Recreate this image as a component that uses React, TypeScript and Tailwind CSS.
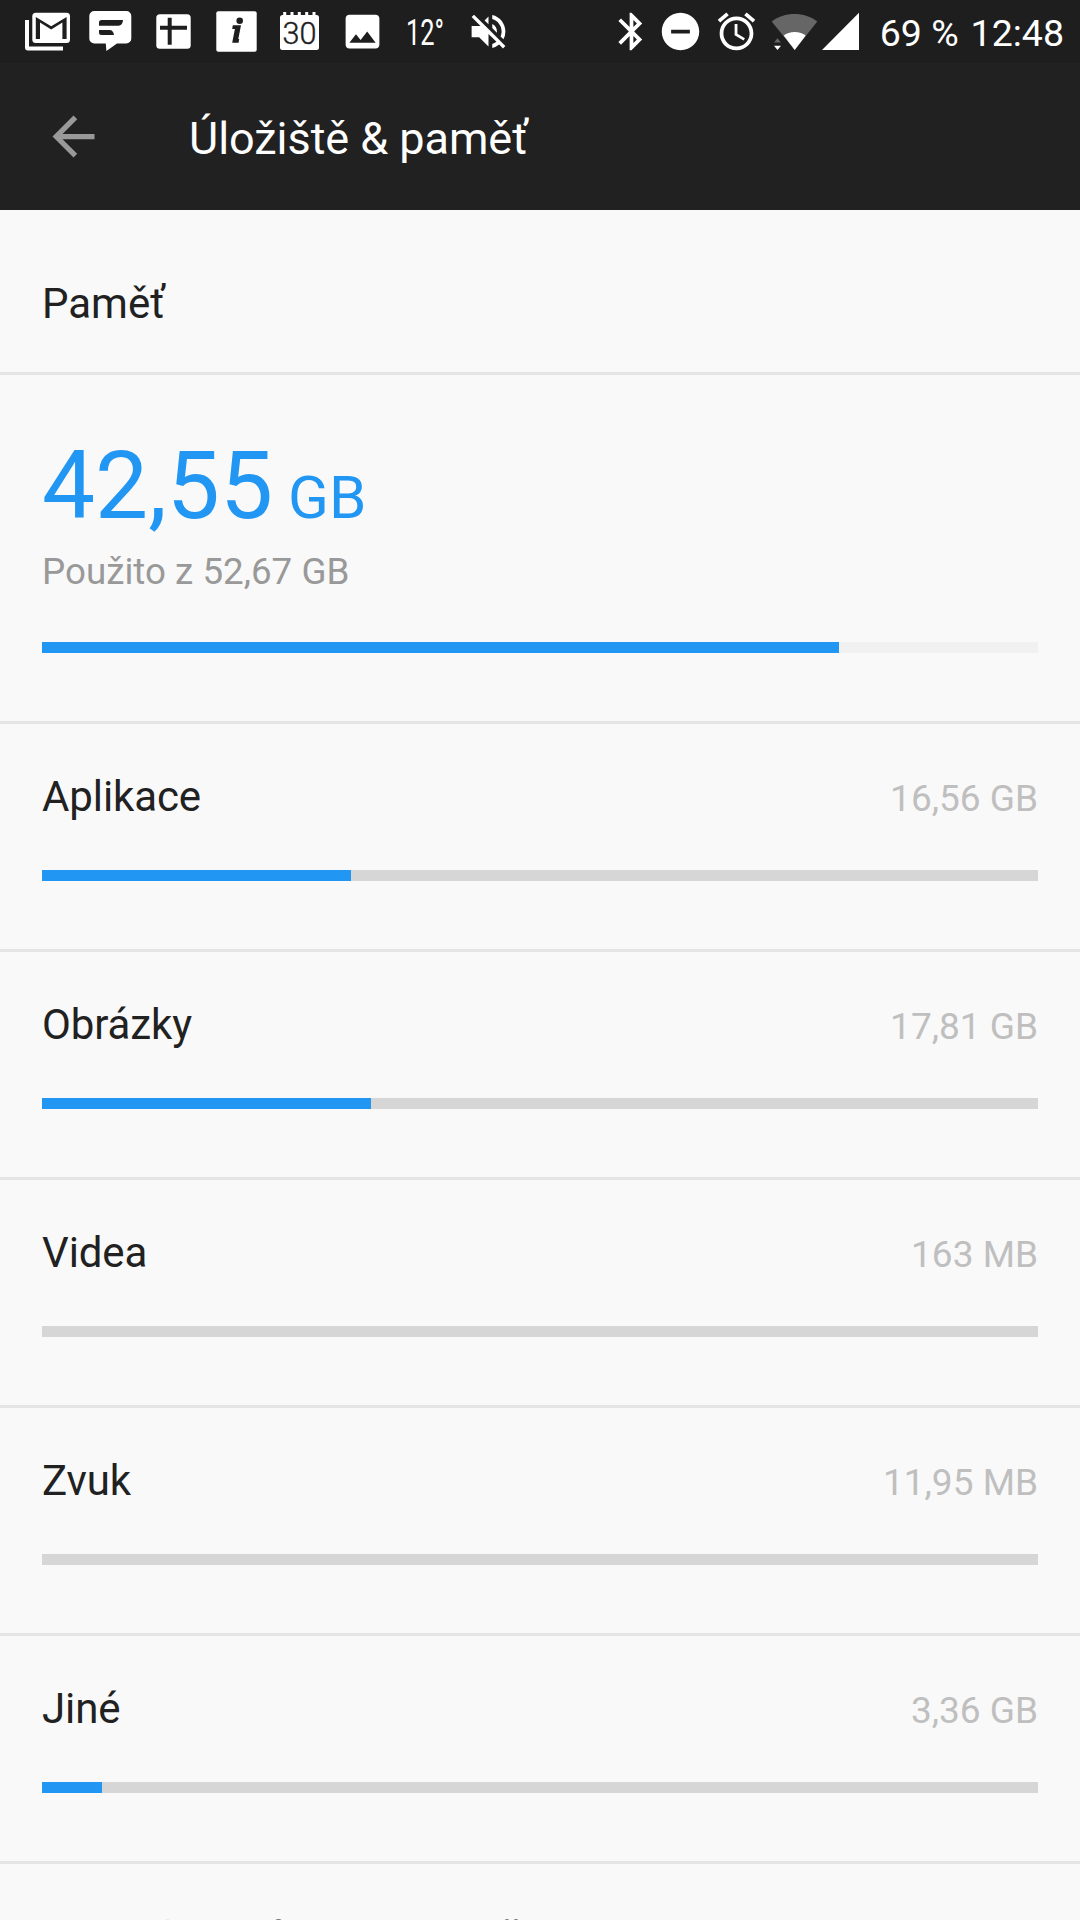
import type { ReactNode } from "react";
import { MdAlarm, MdArrowBack, MdBluetooth, MdDoNotDisturbOn, MdImage, MdVolumeOff } from "react-icons/md";

interface StorageCategory {
  name: string;
  size: string;
  percent: number;
}

const categories: StorageCategory[] = [
  { name: "Aplikace", size: "16,56 GB", percent: 31 },
  { name: "Obrázky", size: "17,81 GB", percent: 33 },
  { name: "Videa", size: "163 MB", percent: 0 },
  { name: "Zvuk", size: "11,95 MB", percent: 0 },
  { name: "Jiné", size: "3,36 GB", percent: 6 },
];

// Every notification sits in a square cell as tall as the status bar
function Cell({ children }: { children: ReactNode }) {
  return <div className="flex size-[63px] items-center justify-center">{children}</div>;
}

function GmailIcon() {
  return (
    <svg viewBox="0 0 63 63" className="size-full">
      <path d="M9 20h4v26.5h34v4H12a3 3 0 0 1-3-3z" fill="#fff" />
      <rect x="16.3" y="12.7" width="37.7" height="30.3" rx="3.5" fill="#fff" />
      <path d="M19.8 39V17L35.2 26.2L50.6 17V39H46.4V22.6L35.2 29.6L24 22.6V39z" fill="#1e1e1e" />
    </svg>
  );
}

function MessageIcon() {
  return (
    <svg viewBox="0 0 63 63" className="size-full">
      <path
        d="M15.3 11h32a5 5 0 0 1 5 5v22.5a5 5 0 0 1-5 5H38L27.4 51l-.6-7.5H15.3a5 5 0 0 1-5-5V16a5 5 0 0 1 5-5z"
        fill="#fff"
      />
      <path
        d="M22.5 20H44c-.3 3.8-1.8 5.7-4.5 5.7H20v-3.2a2.5 2.5 0 0 1 2.5-2.5zM20 30h10.5c2.7 0 4.2 2 4.5 5H22.5a2.5 2.5 0 0 1-2.5-2.5z"
        fill="#1e1e1e"
      />
    </svg>
  );
}

function PlusIcon() {
  return (
    <svg viewBox="0 0 63 63" className="size-full">
      <rect x="14.3" y="14.3" width="34.4" height="34.4" rx="3.5" fill="#fff" />
      <path d="M27.7 17.7V44.7M18 27.7H45" stroke="#1e1e1e" strokeWidth="4" />
    </svg>
  );
}

function InfoIcon() {
  return (
    <svg viewBox="0 0 63 63" className="size-full">
      <rect x="11.3" y="11.3" width="40.4" height="40.4" rx="2" fill="#fff" />
      <circle cx="34.7" cy="20.7" r="3.3" fill="#1e1e1e" />
      <path d="M27.8 25.2H36L33.3 39H34.2L33.6 42.8H27.2L29.9 29H27.2z" fill="#1e1e1e" />
    </svg>
  );
}

function CalendarIcon() {
  return (
    <svg viewBox="0 0 63 63" className="size-full">
      <rect x="12" y="15" width="39" height="35" rx="2.5" fill="#fff" />
      <path d="M16.7 12v4M24 12v4M31.3 12v4M38.7 12v4M46 12v4" stroke="#fff" strokeWidth="3" />
      <text x="14.5" y="44" fontSize="31" fontWeight="300" textLength="34" lengthAdjust="spacingAndGlyphs" fill="#1e1e1e" stroke="#1e1e1e" strokeWidth="0.4">
        30
      </text>
    </svg>
  );
}

function WifiIcon() {
  return (
    <svg viewBox="0 0 48 63" className="h-[63px] w-12">
      <path d="M24.7 50L1.7 21.5C8 16.5 16 14 24.5 14s16.5 2.5 22.8 7.5z" fill="#666" />
      <path d="M24.7 50L13.7 35.5c2.7-2.3 6.7-3.5 11-3.5s8.3 1.2 11 3.5z" fill="#fff" />
      <path d="M4 42.5L7.5 38.3L11 42.5z" fill="#666" />
      <path d="M4 45.7H11L7.5 50z" fill="#fff" />
    </svg>
  );
}

function SignalIcon() {
  return (
    <svg viewBox="0 0 38 63" className="h-[63px] w-[38px]">
      <path d="M37 12.7V50H0z" fill="#fff" />
    </svg>
  );
}

function StatusBar() {
  return (
    <div className="flex h-[63px] shrink-0 items-center bg-[#1e1e1e] pl-4 text-white">
      <Cell><GmailIcon /></Cell>
      <Cell><MessageIcon /></Cell>
      <Cell><PlusIcon /></Cell>
      <Cell><InfoIcon /></Cell>
      <Cell><CalendarIcon /></Cell>
      <Cell><MdImage className="size-[45px]" /></Cell>
      <Cell>
        <svg viewBox="0 0 63 63" className="size-full overflow-visible" fill="#fff">
          <text x="12" y="45" fontSize="37" textLength="38" lengthAdjust="spacingAndGlyphs">12°</text>
        </svg>
      </Cell>
      <Cell><MdVolumeOff className="size-[45px]" /></Cell>

      <div className="ml-auto flex items-center pr-4">
        <MdBluetooth className="size-[45px]" />
        <MdDoNotDisturbOn className="ml-1 size-[45px]" />
        <MdAlarm className="ml-[11px] size-[45px]" />
        <div className="ml-[11px] flex gap-1">
          <WifiIcon />
          <SignalIcon />
        </div>
        <span className="ml-5 pt-[3px] text-[37.5px] leading-[60px] whitespace-nowrap">69 %</span>
        <span className="ml-3 pt-[3px] text-[37.5px] leading-[60px]">12:48</span>
      </div>
    </div>
  );
}

function ProgressBar({ percent, track }: { percent: number; track: string }) {
  return (
    <div className={`h-[11px] w-full ${track}`}>
      <div className="h-full bg-[#2196f3]" style={{ width: `${percent}%` }} />
    </div>
  );
}

function CategoryRow({ category }: { category: StorageCategory }) {
  return (
    <li className="h-[228px] border-b-[3px] border-[#e5e5e5] px-[42px] pt-[48px]">
      <div className="flex h-[98px] items-baseline justify-between leading-[49px]">
        <span className="text-[42px] tracking-[-0.1px] text-[#212121]">{category.name}</span>
        <span className="text-[37px] text-[#bfbfbf]">{category.size}</span>
      </div>
      <ProgressBar percent={category.percent} track="bg-[#d6d6d6]" />
    </li>
  );
}

export default function App() {
  return (
    <div className="flex h-[1920px] w-[1080px] flex-col overflow-hidden bg-[#f9f9f9] font-['Roboto',sans-serif]">
      <StatusBar />

      <header className="flex h-[147px] shrink-0 items-center bg-[#212121] pl-[42px]">
        <MdArrowBack className="size-[63px] text-[#999]" />
        <h1 className="ml-[84px] pt-1 text-[45px] leading-[60px] tracking-[-0.05px] text-white">Úložiště &amp; paměť</h1>
      </header>

      <h2 className="h-[165px] shrink-0 border-b-[3px] border-[#e5e5e5] px-[42px] pt-[69px] text-[42px] leading-[49px] text-[#212121]">
        Paměť
      </h2>

      {/* Souhrn využití */}
      <section className="h-[349px] shrink-0 border-b-[3px] border-[#e5e5e5] px-[42px] pt-[56px]">
        <div className="text-[94.5px] leading-[110px] whitespace-nowrap text-[#2196f3]">
          42,55<span className="ml-[15px] text-[60px] leading-none">GB</span>
        </div>
        <p className="h-[101px] pt-[9px] text-[36.75px] leading-[43px] text-[#999]">Použito z 52,67 GB</p>
        <ProgressBar percent={80} track="bg-[#f1f1f1]" />
      </section>

      <ul className="shrink-0">
        {categories.map((category) => (
          <CategoryRow key={category.name} category={category} />
        ))}
      </ul>

      <p className="shrink-0 pt-[49px] pl-[42px] text-[42px] leading-[49px] text-[#212121]">Data uložená v mezipaměti</p>
    </div>
  );
}
